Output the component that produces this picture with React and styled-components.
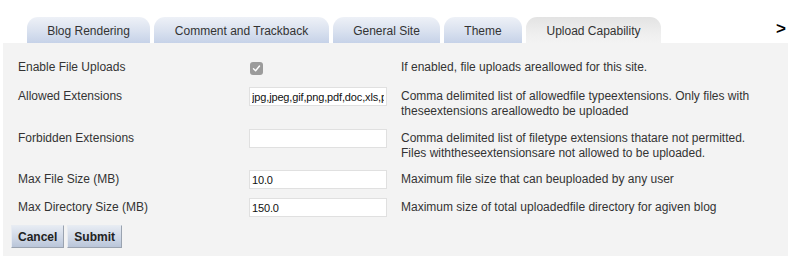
import React from "react";
import styled, { createGlobalStyle } from "styled-components";

const GlobalStyle = createGlobalStyle`
  body {
    margin: 0;
    background: #ffffff;
    font-family: "Liberation Sans", Arial, sans-serif;
    font-size: 12px;
    color: #333;
  }
`;

const tabs = [
  { name: "Blog Rendering", width: 123 },
  { name: "Comment and Trackback", width: 175 },
  { name: "General Site", width: 107 },
  { name: "Theme", width: 78 },
  { name: "Upload Capability", width: 135, active: true },
];

const rows = [
  { label: "Enable File Uploads", kind: "check", desc: ["If enabled, file uploads areallowed for this site."] },
  {
    label: "Allowed Extensions",
    value: "jpg,jpeg,gif,png,pdf,doc,xls,ppt,zip",
    desc: ["Comma delimited list of allowedfile typeextensions. Only files with", "theseextensions areallowedto be uploaded"],
  },
  {
    label: "Forbidden Extensions",
    value: "",
    desc: ["Comma delimited list of filetype extensions thatare not permitted.", "Files withtheseextensionsare not allowed to be uploaded."],
  },
  { label: "Max File Size (MB)", value: "10.0", desc: ["Maximum file size that can beuploaded by any user"] },
  { label: "Max Directory Size (MB)", value: "150.0", desc: ["Maximum size of total uploadedfile directory for agiven blog"] },
];

export default function App() {
  return (
    <Page>
      <GlobalStyle />
      <TabBar>
        {tabs.map((t) => (
          <Tab key={t.name} $w={t.width} $active={t.active}>
            {t.name}
          </Tab>
        ))}
        <Next>&gt;</Next>
      </TabBar>
      <Panel>
        {rows.map((r) => (
          <Row key={r.label} $lines={r.desc.length}>
            <Label>{r.label}</Label>
            <Control>
              {r.kind === "check" ? (
                <Check>
                  <svg width="9" height="9" viewBox="0 0 9 9">
                    <path d="M1.5 4.8 L3.6 6.8 L7.5 2" fill="none" stroke="#fff" strokeWidth="1.4" strokeLinecap="round" strokeLinejoin="round" />
                  </svg>
                </Check>
              ) : (
                <Field type="text" defaultValue={r.value} readOnly />
              )}
            </Control>
            <Desc>
              {r.desc.map((d) => (
                <div key={d}>{d}</div>
              ))}
            </Desc>
          </Row>
        ))}
        <Buttons>
          <Button>Cancel</Button>
          <Button>Submit</Button>
        </Buttons>
      </Panel>
    </Page>
  );
}

const Page = styled.div`
  width: 794px;
  height: 260px;
  padding-top: 17px;
  box-sizing: border-box;
`;

const TabBar = styled.div`
  display: flex;
  align-items: flex-end;
  gap: 4px;
  padding-left: 27px;
  padding-right: 8px;
  height: 26px;
`;

const Tab = styled.div`
  width: ${(p) => p.$w}px;
  height: 26px;
  box-sizing: border-box;
  display: flex;
  align-items: center;
  justify-content: center;
  padding-top: 2px;
  border-radius: 11px 11px 0 0;
  color: #333;
  font-size: 12px;
  background: ${(p) =>
    p.$active
      ? "linear-gradient(to bottom, #e3e3e3 0%, #eeeeee 60%, #f3f3f3 100%)"
      : "linear-gradient(to bottom, #eef1f7 0%, #d9e1ef 55%, #c6d2e8 100%)"};
`;

const Next = styled.div`
  margin-left: auto;
  align-self: center;
  font-weight: bold;
  font-size: 17px;
  color: #000;
  padding-bottom: 2px;
`;

const Panel = styled.div`
  margin: 0 6px 0 3px;
  background: #f3f3f3;
  padding: 15px 0 9px 8px;
  display: flex;
  flex-direction: column;
  gap: 9px;
  height: 213px;
  box-sizing: border-box;
`;

const Row = styled.div`
  display: grid;
  grid-template-columns: 231px 152px 1fr;
  align-items: start;
  padding-left: 7px;
  line-height: 15px;
  margin-top: ${(p) => (p.$lines > 1 ? "1px" : "0")};
`;

const Label = styled.div`
  padding-top: 2px;
  color: #333;
`;

const Control = styled.div`
  display: flex;
  align-items: center;
  min-height: 19px;
`;

const Check = styled.span`
  width: 13px;
  height: 13px;
  margin-left: 1px;
  margin-top: 1px;
  border-radius: 3px;
  background: #9b9b9b;
  display: flex;
  align-items: center;
  justify-content: center;
`;

const Field = styled.input`
  width: 138px;
  height: 19px;
  box-sizing: border-box;
  border: 1px solid #e0e0e0;
  background: #fff;
  font-family: "Liberation Sans", Arial, sans-serif;
  font-size: 11px;
  letter-spacing: -0.15px;
  color: #111;
  padding: 0 2px;
  margin: 0;
  outline: none;
`;

const Desc = styled.div`
  padding-top: 2px;
  color: #333;
`;

const Buttons = styled.div`
  display: flex;
  gap: 3px;
  margin-top: -1px;
`;

const Button = styled.button`
  font-family: "Liberation Sans", Arial, sans-serif;
  font-size: 12px;
  font-weight: bold;
  color: #222;
  height: 23px;
  padding: 0 6px;
  border: 1px solid #9aa3b0;
  border-top-color: #e8ecf2;
  border-left-color: #e8ecf2;
  background: linear-gradient(to bottom, #e6ebf3 0%, #cdd6e5 60%, #b9c5d9 100%);
  border-radius: 0;
  margin: 0;
`;
